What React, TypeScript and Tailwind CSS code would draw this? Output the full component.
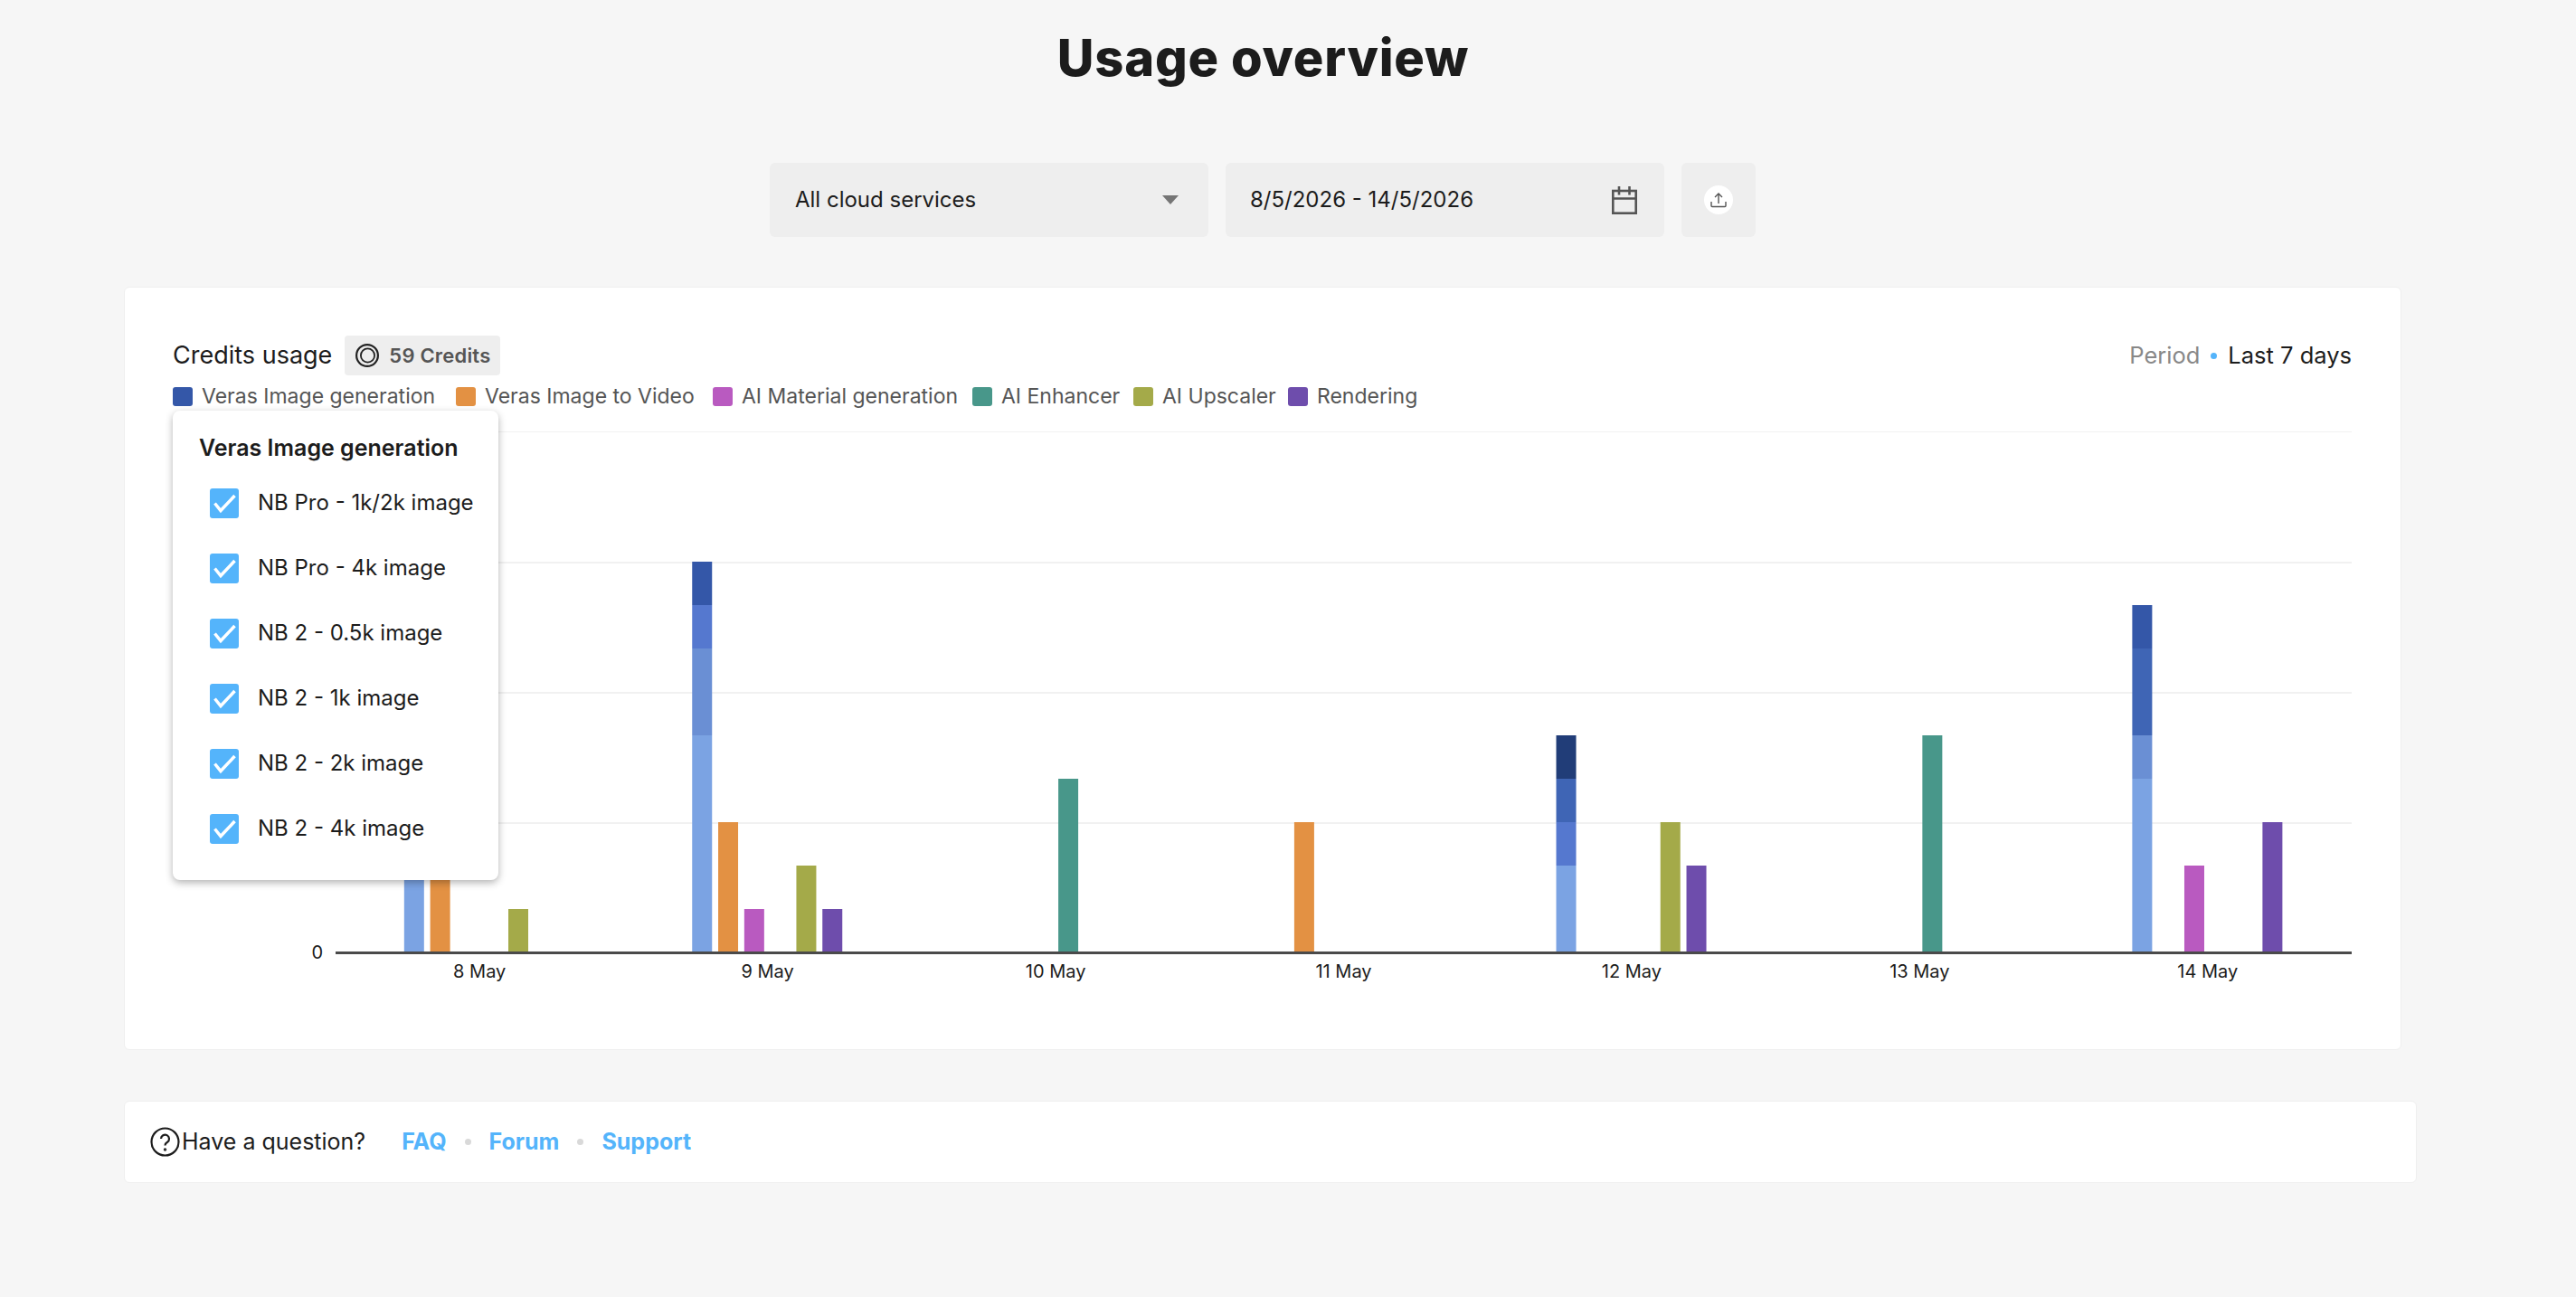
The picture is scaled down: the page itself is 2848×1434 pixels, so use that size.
const font = "font-['Inter','Liberation_Sans',sans-serif]";

const L = '#7ba3e3', M = '#6a8fd4', N = '#5578cf', O = '#3f65b5', P = '#3457a8', Q = '#213d78';
const OR = '#e39143', MG = '#b95ac0', TE = '#48978a', OL = '#a4aa49', PU = '#6e4dac';

type Seg = [number, string];
const days: { label: string; bars: (Seg[] | null)[] }[] = [
  { label: '8 May', bars: [[[3, L]], [[3, OR]], null, null, [[1, OL]], null] },
  { label: '9 May', bars: [[[5, L], [2, M], [1, N], [1, P]], [[3, OR]], [[1, MG]], null, [[2, OL]], [[1, PU]]] },
  { label: '10 May', bars: [null, null, null, [[4, TE]], null, null] },
  { label: '11 May', bars: [null, [[3, OR]], null, null, null, null] },
  { label: '12 May', bars: [[[2, L], [1, N], [1, O], [1, Q]], null, null, null, [[3, OL]], [[2, PU]]] },
  { label: '13 May', bars: [null, null, null, [[5, TE]], null, null] },
  { label: '14 May', bars: [[[4, L], [1, M], [2, O], [1, P]], null, [[2, MG]], null, null, [[3, PU]]] },
];

const legend = [
  ['#3457a8', 'Veras Image generation', 'w-[313px]'],
  ['#e39143', 'Veras Image to Video', 'w-[284px]'],
  ['#b95ac0', 'AI Material generation', 'w-[287px]'],
  ['#48978a', 'AI Enhancer', 'w-[178px]'],
  ['#a4aa49', 'AI Upscaler', 'w-[171px]'],
  ['#6e4dac', 'Rendering', 'w-[150px]'],
];

const options = ['NB Pro - 1k/2k image', 'NB Pro - 4k image', 'NB 2 - 0.5k image', 'NB 2 - 1k image', 'NB 2 - 2k image', 'NB 2 - 4k image'];

function Chart() {
  const W = 2464, H = 640;
  const x0 = 180, xEnd = 2409, base = 576;
  const step = (xEnd - x0) / 7;
  return (
    <svg width={W} height={H} viewBox={`0 0 ${W} ${H}`} className="block">
      {[0, 144, 288, 432].map((y) => (
        <rect key={y} x={x0} y={y} width={xEnd - x0} height={y === 0 ? 1 : 2} fill="#f1f1f1" />
      ))}
      {days.map((d, i) => {
        const c = x0 + step * (i + 0.5);
        return (
          <g key={d.label}>
            {d.bars.map((segs, j) => {
              if (!segs) return null;
              let y = base;
              return segs.map(([v, col], k) => {
                const h = v * 48;
                y -= h;
                return <rect key={k} x={c - 83.4 + j * 28.8} y={y} width={22} height={h} fill={col} />;
              });
            })}
            <text x={c} y={base + 28} textAnchor="middle" fontSize={20} fill="#1c1c1c" fontFamily="Inter, sans-serif">
              {d.label}
            </text>
          </g>
        );
      })}
      <rect x={x0} y={base - 1} width={xEnd - x0} height={3} fill="#4a4a4a" />
      <text x={166} y={base + 7} textAnchor="end" fontSize={20} fill="#1c1c1c" fontFamily="Inter, sans-serif">0</text>
    </svg>
  );
}

export default function App() {
  return (
    <div className={`${font} min-h-[1434px] bg-[#f6f6f6] text-[#1c1c1c]`}>
      <h1 className="pr-[55px] pt-[28px] text-center text-[56px] font-extrabold leading-[72px] tracking-[0.8px]">Usage overview</h1>

      <div className="mt-[80px] flex h-[82px] gap-[19px] pl-[851px]">
        <div className="flex w-[485px] items-center justify-between rounded-[6px] bg-[#eeeeee] pl-[28px] pr-[33px] text-[24px]">
          <span>All cloud services</span>
          <span className="h-0 w-0 border-x-[9px] border-t-[10px] border-x-transparent border-t-[#757575]" />
        </div>
        <div className="flex w-[485px] items-center justify-between rounded-[6px] bg-[#eeeeee] pl-[27px] pr-[30px] text-[24px]">
          <span>8/5/2026 - 14/5/2026</span>
          <svg width="28" height="31" viewBox="0 0 28 31" fill="none" stroke="#555555" strokeWidth="2.6">
            <rect x="1.3" y="5" width="25.4" height="24.7" />
            <path d="M1 13.5h26M8 0v9.5M19.5 0v9.5" />
          </svg>
        </div>
        <div className="flex w-[82px] items-center justify-center rounded-[6px] bg-[#eeeeee]">
          <div className="flex h-[32px] w-[32px] items-center justify-center rounded-full bg-white">
            <svg width="18" height="18" viewBox="0 0 18 18" fill="none" stroke="#555555" strokeWidth="1.4">
              <path d="M9 13V2M5 6l4-4 4 4M1 11v4.5a1 1 0 0 0 1 1h14a1 1 0 0 0 1-1V11" />
            </svg>
          </div>
        </div>
      </div>

      <div className="ml-[137px] mt-[55px] h-[844px] w-[2518px] rounded-[6px] border border-[#efefef] bg-white pl-[53px] pr-[54px] pt-[53px]">
        <div className="flex h-[44px] items-center justify-between">
          <div className="flex items-center gap-[14px]">
            <span className="text-[27px]">Credits usage</span>
            <span className="flex h-[44px] w-[172px] items-center gap-[11px] rounded-[4px] bg-[#eeeeee] pl-[12px] text-[22px] font-semibold tracking-[0.2px] text-[#555555]">
              <svg width="26" height="26" viewBox="0 0 26 26" fill="none" stroke="#222222" strokeWidth="2.2">
                <circle cx="13" cy="13" r="11.9" />
                <circle cx="13.5" cy="13" r="7.6" strokeWidth="1.8" />
              </svg>
              59 Credits
            </span>
          </div>
          <div className="flex items-center text-[25.5px]">
            <span className="text-[#888888]">Period</span>
            <span className="mx-[12px] h-[7px] w-[7px] rounded-full bg-[#54b4fb]" />
            <span>Last 7 days</span>
          </div>
        </div>

        <div className="relative">
          <div className="mt-[12px] flex h-[22px] items-center">
            {legend.map(([c, t, w]) => (
              <div key={t} className={`flex items-center gap-[10px] ${w} shrink-0 whitespace-nowrap`}>
                <span className="h-[21px] w-[22px] shrink-0 rounded-[3px]" style={{ backgroundColor: c }} />
                <span className="text-[23px] text-[#555555]">{t}</span>
              </div>
            ))}
          </div>

          <div className="mt-[28px]">
            <Chart />
          </div>

          <div className="absolute left-0 top-[27px] h-[519px] w-[360px] rounded-[8px] bg-white pl-[29px] pt-[25px] shadow-[0_3px_8px_rgba(0,0,0,0.3)]">
            <div className="text-[25px] font-semibold leading-[32px]">Veras Image generation</div>
            <div className="mt-[9px] flex flex-col">
              {options.map((o) => (
                <div key={o} className="flex h-[72px] items-center gap-[21px] pl-[12px]">
                  <span className="flex h-[33px] w-[32px] items-center justify-center rounded-[3px] bg-[#54b4fb]">
                    <svg width="32" height="33" viewBox="0 0 32 33" fill="none" stroke="white" strokeWidth="3.5">
                      <path d="M5.5 16.5l6.5 8L27.5 8" />
                    </svg>
                  </span>
                  <span className="whitespace-nowrap text-[24px]">{o}</span>
                </div>
              ))}
            </div>
          </div>
        </div>
      </div>

      <div className="ml-[137px] mt-[56px] flex h-[91px] w-[2535px] items-center rounded-[6px] border border-[#efefef] bg-white pl-[28px] text-[25px]">
        <svg width="33" height="33" viewBox="0 0 33 33" fill="none" stroke="#1c1c1c" strokeWidth="2.2" className="mr-[2px]">
          <circle cx="16.5" cy="16.5" r="15" />
          <path d="M12 13a4.5 4.5 0 1 1 7 3.8c-1.6 1-2.5 1.8-2.5 3.7" />
          <circle cx="16.5" cy="25" r="0.6" fill="#1c1c1c" />
        </svg>
        <span>Have a question?</span>
        <div className="ml-[40px] flex items-center font-bold text-[#54b4fb]">
          <span>FAQ</span>
          <span className="mx-[20px] h-[7px] w-[7px] rounded-full bg-[#d9d9d9]" />
          <span>Forum</span>
          <span className="mx-[20px] h-[7px] w-[7px] rounded-full bg-[#d9d9d9]" />
          <span>Support</span>
        </div>
      </div>
    </div>
  );
}
